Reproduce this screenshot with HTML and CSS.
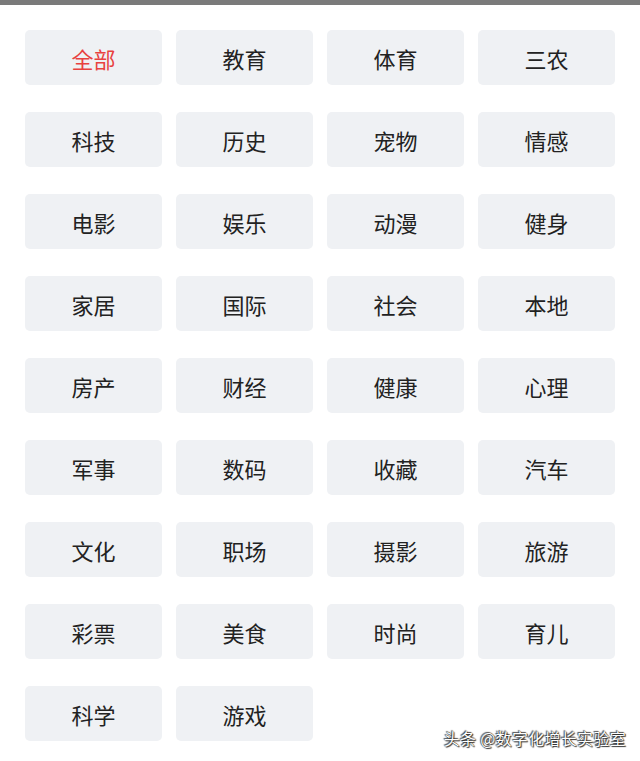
FILE: index.html
```html
<!DOCTYPE html>
<html lang="zh-CN">
<head>
    <meta charset="UTF-8">
    <meta name="viewport" content="width=device-width, initial-scale=1.0">
    <title>频道</title>
    <link rel="stylesheet" href="styles.css">
</head>
<body>
    <div class="top-bar"></div>

    <div class="channel-grid">
        <div class="channel active">全部</div>
        <div class="channel">教育</div>
        <div class="channel">体育</div>
        <div class="channel">三农</div>
        <div class="channel">科技</div>
        <div class="channel">历史</div>
        <div class="channel">宠物</div>
        <div class="channel">情感</div>
        <div class="channel">电影</div>
        <div class="channel">娱乐</div>
        <div class="channel">动漫</div>
        <div class="channel">健身</div>
        <div class="channel">家居</div>
        <div class="channel">国际</div>
        <div class="channel">社会</div>
        <div class="channel">本地</div>
        <div class="channel">房产</div>
        <div class="channel">财经</div>
        <div class="channel">健康</div>
        <div class="channel">心理</div>
        <div class="channel">军事</div>
        <div class="channel">数码</div>
        <div class="channel">收藏</div>
        <div class="channel">汽车</div>
        <div class="channel">文化</div>
        <div class="channel">职场</div>
        <div class="channel">摄影</div>
        <div class="channel">旅游</div>
        <div class="channel">彩票</div>
        <div class="channel">美食</div>
        <div class="channel">时尚</div>
        <div class="channel">育儿</div>
        <div class="channel">科学</div>
        <div class="channel">游戏</div>
    </div>

    <div class="watermark">头条 @数字化增长实验室</div>
</body>
</html>
```

FILE: styles.css
```css
:root {
    --text-color: #222222;
    --active-color: #e8413f;
    --tile-bg: #eff1f4;
}

body {
    margin: 0;
    width: 640px;
    height: 761px;
    overflow: hidden;
    position: relative;
    background: #ffffff;
    font-family: "Noto Sans CJK SC", "Noto Sans", sans-serif;
    color: var(--text-color);
}

.top-bar {
    height: 5px;
    background-color: #7a7a7a;
}

.channel-grid {
    display: grid;
    grid-template-columns: repeat(4, 137px);
    grid-auto-rows: 55px;
    column-gap: 14px;
    row-gap: 27px;
    padding: 25px 25px 0 25px;
}

.channel {
    display: flex;
    justify-content: center;
    align-items: center;
    background-color: var(--tile-bg);
    border-radius: 5px;
    font-size: 22px;
}

.channel.active {
    color: var(--active-color);
}

.watermark {
    position: absolute;
    right: 14px;
    bottom: 11px;
    font-size: 16px;
    letter-spacing: 0.3px;
    color: #ffffff;
    text-shadow: 0 0 1px #000, 1px 1px 1px #333, -1px -1px 1px #555;
}
```
